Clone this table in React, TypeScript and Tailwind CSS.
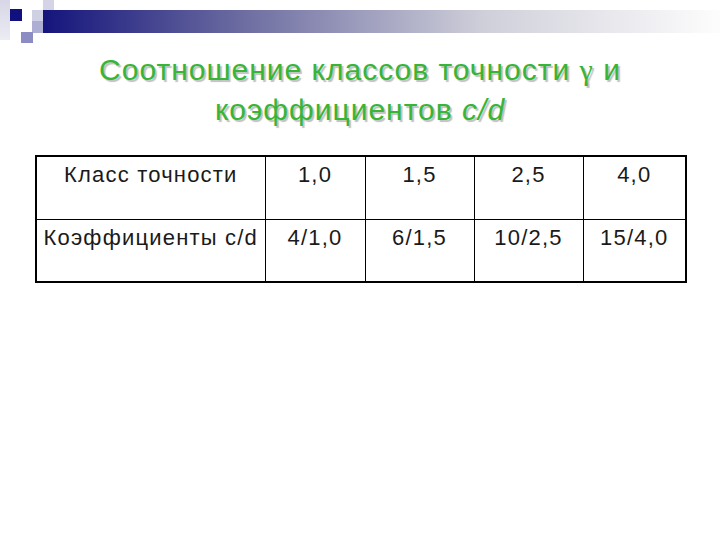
export default function App() {
  const header = ["Класс точности", "1,0", "1,5", "2,5", "4,0"]
  const values = ["Коэффициенты c/d", "4/1,0", "6/1,5", "10/2,5", "15/4,0"]

  return (
    <div className="w-[720px] h-[540px] bg-white overflow-hidden" style={{ fontFamily: '"Liberation Sans", Arial, sans-serif' }}>
      {/* slide template decoration */}
      <svg width="720" height="44" viewBox="0 0 720 44" className="block">
        <defs>
          <linearGradient id="bar" x1="0" x2="1" y1="0" y2="0">
            <stop offset="0" stopColor="#14147c" />
            <stop offset="0.3" stopColor="#6e6ea2" />
            <stop offset="0.65" stopColor="#cfcfda" />
            <stop offset="1" stopColor="#fdfdfd" />
          </linearGradient>
          <linearGradient id="side" x1="0" x2="0" y1="0" y2="1">
            <stop offset="0" stopColor="#d6d6e6" />
            <stop offset="1" stopColor="#ececf4" />
          </linearGradient>
        </defs>
        <rect x="0" y="0" width="10" height="40" fill="url(#side)" />
        <rect x="10" y="9" width="12" height="12" fill="#10107e" />
        <rect x="43" y="0" width="11" height="11" fill="#d4d4e6" />
        <rect x="32" y="10" width="11" height="11" fill="#d0d0e4" />
        <rect x="32" y="21" width="11" height="12" fill="#aeaed4" />
        <rect x="21" y="32" width="12" height="11" fill="#8c8cc4" />
        <rect x="43" y="10" width="677" height="23" fill="url(#bar)" />
      </svg>

      <h1 className="mt-[6px] text-center text-[30px] leading-[40px] tracking-[1px] font-normal text-[#36b536] [text-shadow:2px_2px_1px_rgba(0,0,0,0.25)]">
        Соотношение классов точности <span style={{ fontFamily: '"Liberation Serif", serif' }}>γ</span> и
        <br />
        коэффициентов <span className="italic">c/d</span>
      </h1>

      <table className="mt-[25px] ml-[35px] w-[650px] table-fixed border-collapse border-2 border-black text-[22px] leading-[26px] text-[#1a1a1a]">
        <colgroup>
          <col className="w-[229px]" />
          <col className="w-[100px]" />
          <col className="w-[109px]" />
          <col className="w-[109px]" />
          <col className="w-[103px]" />
        </colgroup>
        <tbody>
          <tr className="h-[63px]">
            {header.map((cell) => (
              <td key={cell} className="border border-black align-top text-center pt-[5px] tracking-[1.2px] whitespace-nowrap">
                {cell}
              </td>
            ))}
          </tr>
          <tr className="h-[63px]">
            {values.map((cell) => (
              <td key={cell} className="border border-black align-top text-center pt-[5px] tracking-[1.2px] whitespace-nowrap">
                {cell}
              </td>
            ))}
          </tr>
        </tbody>
      </table>
    </div>
  )
}
